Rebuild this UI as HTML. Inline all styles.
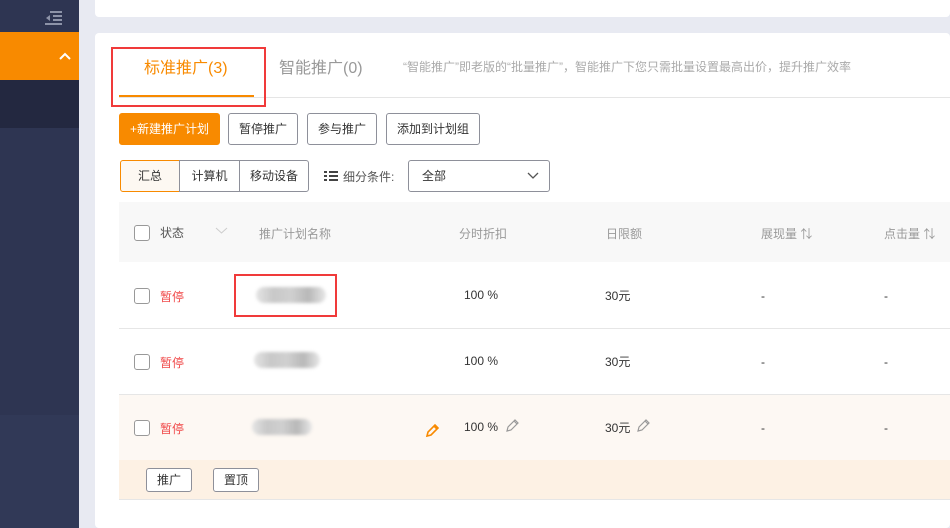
<!DOCTYPE html>
<html><head><meta charset="utf-8"><style>
*{margin:0;padding:0;box-sizing:border-box}
body{width:950px;height:528px;overflow:hidden;background:#e8eaf2;font-family:"Liberation Sans","Noto Sans CJK SC",sans-serif;font-size:12px;color:#333;position:relative}
.a{position:absolute}
.btn{position:absolute;height:32px;border:1px solid #8e909a;border-radius:3px;background:#fff;font-size:12px;line-height:30px;text-align:center;color:#333}
.cb{position:absolute;width:16px;height:16px;border:1px solid #999;border-radius:3px;background:#fff}
.red{color:#f04848}
.blur{position:absolute;height:16px;border-radius:8px;background:linear-gradient(90deg,#e4e4e4,#c8c8c8,#d0d0d0,#b8b8b8,#e8e8e8);filter:blur(1.5px)}
</style></head><body>
<div class="a" style="left:0;top:0;width:79px;height:528px;background:#2e3552"></div>
<div class="a" style="left:0;top:415px;width:79px;height:113px;background:#313957"></div>
<div class="a" style="left:0;top:32px;width:79px;height:48px;background:#f88a00"></div>
<div class="a" style="left:0;top:80px;width:79px;height:48px;background:#232840"></div>
<svg class="a" style="left:45px;top:11px" width="18" height="14"><path d="M5 1h12M8 5h9M8 9h9M0 13h17" stroke="#8d93a8" stroke-width="2"/><path d="M1 7l4-3v6z" fill="#8d93a8"/></svg>
<svg class="a" style="left:59px;top:52px" width="12" height="8"><path d="M1 7l5-5 5 5" stroke="#fff" stroke-width="2" fill="none"/></svg>
<div class="a" style="left:95px;top:0;width:855px;height:17px;background:#fff;border-radius:0 0 4px 4px"></div>
<div class="a" style="left:95px;top:33px;width:855px;height:495px;background:#fff;border-radius:4px"></div>
<div class="a" style="left:119px;top:97px;width:831px;height:1px;background:#e5e5e5"></div>
<div class="a" style="left:144px;top:54px;font-size:16px;color:#f88a00">标准推广(3)</div>
<div class="a" style="left:119px;top:95px;width:135px;height:2px;background:#f88a00"></div>
<div class="a" style="left:111px;top:47px;width:155px;height:60px;border:2px solid #f03a3a"></div>
<div class="a" style="left:279px;top:54px;font-size:16px;color:#999">智能推广(0)</div>
<div class="a" style="left:403px;top:58px;font-size:12px;color:#aaa">“智能推广”即老版的“批量推广”，智能推广下您只需批量设置最高出价，提升推广效率</div>
<div class="btn" style="left:119px;top:113px;width:101px;background:#f88a00;border-color:#f88a00;color:#fff">+新建推广计划</div>
<div class="btn" style="left:228px;top:113px;width:70px">暂停推广</div>
<div class="btn" style="left:307px;top:113px;width:70px">参与推广</div>
<div class="btn" style="left:386px;top:113px;width:94px">添加到计划组</div>
<div class="btn" style="left:120px;top:160px;width:60px;border-color:#f88a00;background:#fdf8f2;border-radius:3px 0 0 3px">汇总</div>
<div class="btn" style="left:179px;top:160px;width:61px;border-radius:0">计算机</div>
<div class="btn" style="left:239px;top:160px;width:70px;border-radius:0 3px 3px 0">移动设备</div>
<svg class="a" style="left:324px;top:171px" width="14" height="10"><path d="M0 1h3M5 1h9M0 5h3M5 5h9M0 9h3M5 9h9" stroke="#444" stroke-width="2"/></svg>
<div class="a" style="left:343px;top:168px;color:#555">细分条件:</div>
<div class="btn" style="left:408px;top:160px;width:142px;text-align:left;padding-left:13px">全部</div>
<svg class="a" style="left:527px;top:172px" width="12" height="8"><path d="M1 1l5 5 5-5" stroke="#555" stroke-width="1.3" fill="none"/></svg>
<div class="a" style="left:119px;top:202px;width:831px;height:60px;background:#f8f8f8"></div>
<div class="cb" style="left:134px;top:225px"></div>
<div class="a" style="left:160px;top:224px;color:#555">状态</div>
<svg class="a" style="left:215px;top:227px" width="13" height="8"><path d="M1 1l5.5 5 5.5-5" stroke="#ccc" stroke-width="1" fill="none"/></svg>
<div class="a" style="left:259px;top:225px;color:#999">推广计划名称</div>
<div class="a" style="left:459px;top:225px;color:#999">分时折扣</div>
<div class="a" style="left:606px;top:225px;color:#999">日限额</div>
<div class="a" style="left:761px;top:225px;color:#999">展现量 ⇅</div>
<div class="a" style="left:884px;top:225px;color:#999">点击量 ⇅</div>
<div class="a" style="left:119px;top:328px;width:831px;height:1px;background:#e6e6e6"></div>
<div class="a" style="left:119px;top:394px;width:831px;height:66px;background:#fdf8f3;border-top:1px solid #e6e6e6"></div>
<div class="a" style="left:119px;top:460px;width:831px;height:40px;background:#fdf1e4;border-bottom:1px solid #e6e6e6"></div>
<div class="cb" style="left:134px;top:288px"></div><div class="a red" style="left:160px;top:288px">暂停</div>
<div class="cb" style="left:134px;top:354px"></div><div class="a red" style="left:160px;top:354px">暂停</div>
<div class="cb" style="left:134px;top:420px"></div><div class="a red" style="left:160px;top:420px">暂停</div>
<div class="blur" style="left:256px;top:287px;width:70px"></div>
<div class="blur" style="left:254px;top:352px;width:66px"></div>
<div class="blur" style="left:252px;top:419px;width:60px"></div>
<div class="a" style="left:234px;top:274px;width:103px;height:43px;border:2px solid #f03a3a"></div>
<div class="a" style="left:464px;top:288px">100 %</div>
<div class="a" style="left:464px;top:354px">100 %</div>
<div class="a" style="left:464px;top:420px">100 %</div>
<div class="a" style="left:605px;top:287px">30元</div>
<div class="a" style="left:605px;top:353px">30元</div>
<div class="a" style="left:605px;top:419px">30元</div>
<div class="a" style="left:761px;top:289px">-</div><div class="a" style="left:884px;top:289px">-</div>
<div class="a" style="left:761px;top:355px">-</div><div class="a" style="left:884px;top:355px">-</div>
<div class="a" style="left:761px;top:421px">-</div><div class="a" style="left:884px;top:421px">-</div>
<svg class="a" style="left:425px;top:424px" width="14" height="14"><path d="M2 12l1-4 7-7 3 3-7 7z M9 2l3 3" stroke="#f88a00" stroke-width="1.6" fill="none"/></svg>
<svg class="a" style="left:505px;top:419px" width="14" height="14"><path d="M2 12l1-4 7-7 3 3-7 7z M9 2l3 3" stroke="#999" stroke-width="1.2" fill="none"/></svg>
<svg class="a" style="left:636px;top:419px" width="14" height="14"><path d="M2 12l1-4 7-7 3 3-7 7z M9 2l3 3" stroke="#999" stroke-width="1.2" fill="none"/></svg>
<div class="btn" style="left:146px;top:468px;width:46px;height:24px;line-height:22px">推广</div>
<div class="btn" style="left:213px;top:468px;width:46px;height:24px;line-height:22px">置顶</div>
</body></html>
